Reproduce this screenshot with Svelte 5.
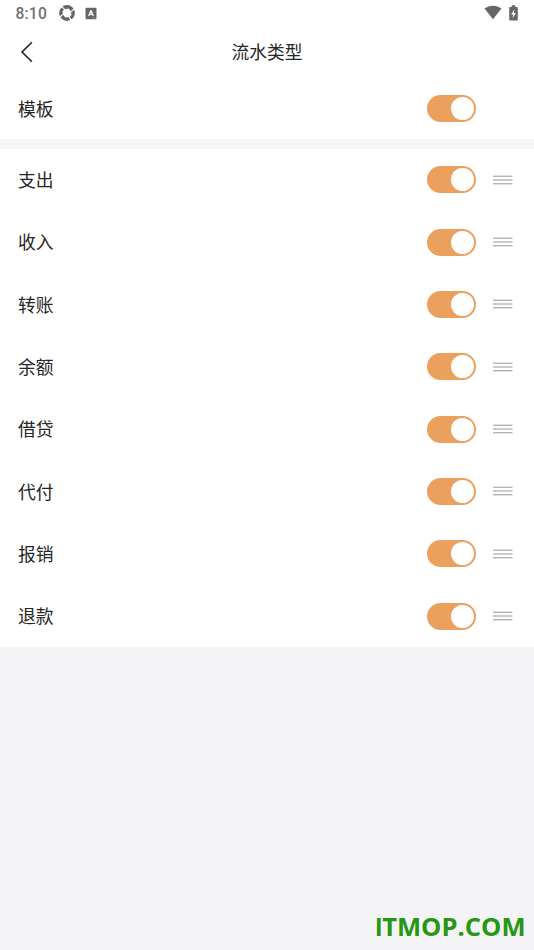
<script>
  const rows = ['支出', '收入', '转账', '余额', '借贷', '代付', '报销', '退款'];
  let enabled = $state(Object.fromEntries(['模板', ...rows].map((name) => [name, true])));
</script>

{#snippet toggle(name)}
  <button
    class="switch"
    class:on={enabled[name]}
    role="switch"
    aria-checked={enabled[name]}
    aria-label={name}
    onclick={() => (enabled[name] = !enabled[name])}
  >
    <span class="knob"></span>
  </button>
{/snippet}

<div class="screen">
  <div class="status">
    <span class="clock">8:10</span>
    <svg class="swirl" width="16" height="16" viewBox="0 0 16 16">
      <circle cx="8" cy="8" r="7.9" fill="#666" />
      <path d="M3.2 1.2 6.3 4.2 9.6 3.4 12 6.3 14.8 3.2 15.4 4.4 11.9 7.6 12.6 9.8 10.6 12 12.8 14.8 11.6 15.4 9.4 12 6.4 12.6 4 9.8 1.2 12.8.6 11.6 4 8.4 3.4 6.2 5.2 4.5 2.2 2.2Z" fill="#fff" />
    </svg>
    <svg class="abox" width="12" height="13" viewBox="0 0 12 13">
      <rect x=".5" y=".8" width="11" height="11.4" rx="1" fill="#666" />
      <path d="M3.7 9 5.7 4H6.3L8.3 9M4.5 7.4H7.5" fill="none" stroke="#fff" stroke-width="1.3" />
      <path d="M7.6 10.9H10" stroke="#aaa" stroke-width=".8" />
    </svg>
    <span class="space"></span>
    <svg class="wifi" width="18" height="15" viewBox="0 0 18 15">
      <path d="M.5 3.6C5.3-.3 12.7-.3 17.5 3.6L9 14.3Z" fill="#666" />
    </svg>
    <svg class="battery" width="9" height="16" viewBox="0 0 9 16">
      <path d="M2.7.3H6.3V2H8Q8.8 2 8.8 2.8V14.6Q8.8 15.5 8 15.5H1Q.2 15.5.2 14.6V2.8Q.2 2 1 2H2.7Z" fill="#666" />
      <path d="M5.5 4 2.1 9.4H4.1L3.6 13.3 6.9 7.9H4.9Z" fill="#fff" />
    </svg>
  </div>

  <header>
    <svg class="back" width="14" height="22" viewBox="0 0 14 22">
      <path d="M11.9 1.2 2 11 11.9 20.8" fill="none" stroke="#222" stroke-width="1.6" />
    </svg>
    <h1>流水类型</h1>
  </header>

  <div class="row template">
    <span class="label">模板</span>
    {@render toggle('模板')}
    <span class="handle"></span>
  </div>
  <div class="gap"></div>

  <div class="list">
    {#each rows as name}
      <div class="row">
        <span class="label">{name}</span>
        {@render toggle(name)}
        <svg class="handle" width="20" height="10" viewBox="0 0 20 10">
          <path d="M0 1.2H19.5M0 5H19.5M0 8.8H19.5" stroke="#8b8b8b" stroke-width=".9" />
        </svg>
      </div>
    {/each}
  </div>

  <footer>
    <svg width="156" height="40" viewBox="0 0 156 40">
      <text class="mark plain" x="1.2" y="29">I</text>
      <text class="mark" x="8.2" y="29" textLength="143.4" lengthAdjust="spacingAndGlyphs">TMOP.COM</text>
    </svg>
  </footer>
</div>

<style>
  .screen {
    display: flex;
    flex-direction: column;
    width: 534px;
    height: 950px;
    background: #f4f4f7;
    color: #262626;
    font-family: 'Noto Sans CJK SC', sans-serif;
    overflow: hidden;
  }
  svg {
    display: block;
    flex: none;
  }
  .status {
    display: flex;
    align-items: center;
    box-sizing: border-box;
    height: 27px;
    padding: 0 16px 0 15.5px;
    background: #fff;
  }
  .clock {
    width: 43.5px;
    font: 500 15.6px/27px Roboto, sans-serif;
    letter-spacing: 0.2px;
    color: #707070;
    padding-top: 2px;
    box-sizing: border-box;
  }
  .swirl {
    margin-top: -1px;
  }
  .abox {
    margin-left: 10px;
  }
  .space {
    flex: 1;
  }
  .wifi {
    margin: -2px 7px 0 0;
  }
  .battery {
    margin-top: -2px;
  }
  header {
    display: flex;
    align-items: center;
    height: 50px;
    padding-left: 20px;
    background: #fff;
  }
  h1 {
    flex: 1;
    margin: 0;
    padding: 0 34px 2px 0;
    text-align: center;
    font-size: 17.7px;
    font-weight: 400;
    line-height: 26px;
  }
  .row {
    display: flex;
    align-items: center;
    box-sizing: border-box;
    flex: 1;
    padding: 0 21px 0 18px;
    background: #fff;
  }
  .template {
    flex: 0 0 62.4px;
  }
  .label {
    flex: 1;
    padding-bottom: 1.4px;
    font-size: 17.8px;
    line-height: 26px;
  }
  .gap {
    flex: 0 0 9.2px;
    background: #f4f4f4;
  }
  .list {
    display: flex;
    flex-direction: column;
    flex: 0 0 498.6px;
  }
  .switch {
    display: flex;
    align-items: center;
    box-sizing: border-box;
    width: 49px;
    height: 27px;
    padding: 0 1.7px;
    border: 0;
    border-radius: 14px;
    background: #ccc;
  }
  .switch.on {
    justify-content: flex-end;
    background: #eba05e;
  }
  .knob {
    width: 23px;
    height: 23px;
    border-radius: 50%;
    background: #fff;
  }
  .handle {
    width: 20px;
    margin-left: 17px;
  }
  footer {
    display: flex;
    justify-content: flex-end;
    margin-top: auto;
    padding: 0 4px 3px 0;
  }
  .mark {
    font: 700 25.2px 'Open Sans', sans-serif;
    fill: #279614;
  }
  .mark.plain {
    font-family: 'Liberation Sans', sans-serif;
  }
</style>
